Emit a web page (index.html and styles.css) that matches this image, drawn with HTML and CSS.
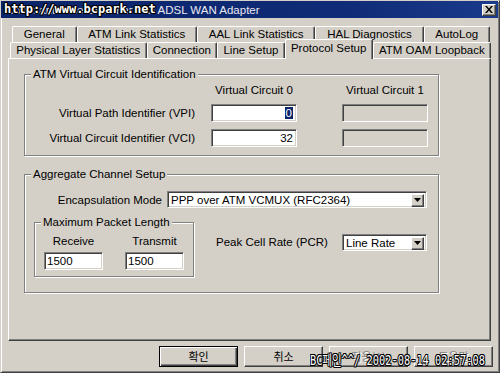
FILE: index.html
```html
<!DOCTYPE html>
<html>
<head>
<meta charset="utf-8">
<link rel="stylesheet" href="styles.css">
</head>
<body>
<div class="window">
  <div class="titlebar">
    <span class="title">Conexant AccessRunner PCI ADSL WAN Adapter</span>
    <span class="close"><svg width="8" height="7" viewBox="0 0 8 7"><path d="M0 0h2l2 2.4L6 0h2L5 3.5 8 7H6L4 4.6 2 7H0l3-3.5z" fill="#000"/></svg></span>
    <span class="wm-top">http://www.bcpark.net</span>
  </div>

  <div class="tabs">
    <div class="tabrow back">
      <div class="tab">General</div>
      <div class="tab">ATM Link Statistics</div>
      <div class="tab">AAL Link Statistics</div>
      <div class="tab">HAL Diagnostics</div>
      <div class="tab">AutoLog</div>
    </div>
    <div class="tabrow front">
      <div class="tab">Physical Layer Statistics</div>
      <div class="tab">Connection</div>
      <div class="tab">Line Setup</div>
      <div class="tab active">Protocol Setup</div>
      <div class="tab">ATM OAM Loopback</div>
    </div>
  </div>

  <div class="panel">
    <div class="group vc">
      <div class="group-title">ATM Virtual Circuit Identification</div>
      <div class="vc-grid">
        <div></div>
        <div class="colhead">Virtual Circuit 0</div>
        <div class="colhead">Virtual Circuit 1</div>

        <div class="lbl">Virtual Path Identifier (VPI)</div>
        <div class="field num"><span class="sel">0</span></div>
        <div class="field off"></div>

        <div class="lbl">Virtual Circuit Identifier (VCI)</div>
        <div class="field num">32</div>
        <div class="field off"></div>
      </div>
    </div>

    <div class="group agg">
      <div class="group-title">Aggregate Channel Setup</div>
      <div class="encap-row">
        <div class="encap-lbl">Encapsulation Mode</div>
        <div class="select wide">
          <span class="select-text">PPP over ATM VCMUX (RFC2364)</span>
          <span class="drop"><svg width="7" height="4" viewBox="0 0 7 4"><path d="M0 0h7L3.5 4z" fill="#000"/></svg></span>
        </div>
      </div>
      <div class="lower-row">
        <div class="group mpl">
          <div class="group-title">Maximum Packet Length</div>
          <div class="mpl-grid">
            <div class="mpl-lbl">Receive</div>
            <div class="mpl-lbl">Transmit</div>
            <div class="field small">1500</div>
            <div class="field small">1500</div>
          </div>
        </div>
        <div class="pcr-lbl">Peak Cell Rate (PCR)</div>
        <div class="select narrow">
          <span class="select-text">Line Rate</span>
          <span class="drop"><svg width="7" height="4" viewBox="0 0 7 4"><path d="M0 0h7L3.5 4z" fill="#000"/></svg></span>
        </div>
      </div>
    </div>
  </div>

  <div class="buttons">
    <div class="btn default">확인</div>
    <div class="btn">취소</div>
    <div class="btn disabled">적용(A)</div>
    <div class="btn disabled">도움말</div>
  </div>

  <span class="wm-bottom">BC페인^^/ 2002-08-14 02:57:08</span>
</div>
</body>
</html>
```

FILE: styles.css
```css
* { box-sizing: border-box; }

html, body {
  margin: 0;
  padding: 0;
  background: #d4d0c8;
}

body {
  font-family: "Liberation Sans", "Noto Sans CJK KR", sans-serif;
  font-size: 11.5px;
  color: #000;
}

.window {
  position: relative;
  width: 500px;
  height: 373px;
  background: #d4d0c8;
  border: 1px solid;
  border-color: #d4d0c8 #404040 #404040 #d4d0c8;
  box-shadow: inset 1px 1px 0 #fff, inset -1px -1px 0 #808080;
  overflow: hidden;
}

/* ---------- title bar ---------- */
.titlebar {
  position: relative;
  height: 17px;
  margin: 0 1px 0 0;
  background: linear-gradient(to right, #0a246a 0%, #102c78 70%, #1a3a8a 100%);
  display: flex;
  align-items: center;
  padding-left: 5px;
}

.title {
  flex: 1;
  color: #e8e8f0;
  font-size: 11.5px;
  white-space: nowrap;
}

.close {
  width: 14px;
  height: 12px;
  margin-right: 2px;
  background: #d4d0c8;
  border: 1px solid;
  border-color: #fff #404040 #404040 #fff;
  box-shadow: inset -1px -1px 0 #808080;
  display: flex;
  align-items: center;
  justify-content: center;
}

.wm-top {
  position: absolute;
  left: 3px;
  top: 1px;
  font-family: "DejaVu Sans Mono", monospace;
  font-weight: bold;
  font-size: 12px;
  line-height: 15px;
  color: #fff;
  text-shadow: 1px 0 0 #000, -1px 0 0 #000, 0 1px 0 #000, 0 -1px 0 #000,
               1px 1px 0 #000, -1px -1px 0 #000, 1px -1px 0 #000, -1px 1px 0 #000;
}

/* ---------- tabs ---------- */
.tabs {
  margin-top: 8px;
}

.tabrow {
  display: flex;
  height: 16px;
}

.tabrow.back {
  margin: 0 9px 0 11px;
}

.tabrow.front {
  margin: 0 8px 0 9px;
}

.tab {
  flex: 1 1 auto;
  height: 16px;
  padding: 0 4px;
  text-align: center;
  line-height: 15px;
  white-space: nowrap;
  border-top: 1px solid #fff;
  border-left: 1px solid #fff;
  border-right: 1px solid #404040;
  border-radius: 2px 2px 0 0;
  box-shadow: inset -1px 0 0 #808080;
  background: #d4d0c8;
}

.tab.active {
  position: relative;
  z-index: 2;
  height: 20px;
  margin-top: -3px;
  line-height: 16px;
}

/* ---------- panel ---------- */
.panel {
  position: relative;
  z-index: 1;
  height: 283px;
  margin: 0 8px 0 7px;
  border: 1px solid;
  border-color: #fff #404040 #404040 #fff;
  box-shadow: inset -1px -1px 0 #808080;
  padding: 15px 0 0 15px;
}

.group {
  position: relative;
  border: 1px solid #808080;
  box-shadow: 1px 1px 0 #fff, inset 1px 1px 0 #fff;
}

.group-title {
  position: absolute;
  top: -8px;
  left: 6px;
  padding: 0 2px;
  background: #d4d0c8;
  line-height: 14px;
  white-space: nowrap;
}

.group.vc {
  width: 415px;
  height: 82px;
  padding-top: 8px;
}

.vc-grid {
  display: grid;
  grid-template-columns: 186px 131px 86px;
  grid-template-rows: 14px 18px 18px;
  row-gap: 7px;
  align-items: center;
}

.colhead {
  width: 86px;
  display: flex;
  justify-content: center;
  white-space: nowrap;
  line-height: 14px;
}

.lbl {
  text-align: right;
  padding-right: 16px;
  white-space: nowrap;
}

.field {
  height: 18px;
  background: #fff;
  border: 1px solid;
  border-color: #808080 #fff #fff #808080;
  box-shadow: inset 1px 1px 0 #404040, inset -1px -1px 0 #d4d0c8;
  line-height: 16px;
  padding: 0 3px;
  white-space: nowrap;
}

.vc-grid .field {
  width: 86px;
}

.field.num {
  text-align: right;
}

.field.off {
  background: #d4d0c8;
}

.sel {
  background: #0a246a;
  color: #fff;
  padding: 0 1px;
}

.group.agg {
  width: 415px;
  height: 119px;
  margin-top: 18px;
  padding-top: 16px;
}

.encap-row {
  display: flex;
  align-items: center;
  height: 17px;
}

.encap-lbl {
  width: 137px;
  text-align: right;
  white-space: nowrap;
}

.select {
  display: flex;
  align-items: center;
  height: 17px;
  background: #fff;
  border: 1px solid;
  border-color: #808080 #fff #fff #808080;
  box-shadow: inset 1px 1px 0 #404040, inset -1px -1px 0 #d4d0c8;
  padding: 2px 2px 1px 3px;
}

.select.wide {
  width: 260px;
  margin-left: 5px;
}

.select.narrow {
  width: 85px;
  margin-top: 12px;
}

.select-text {
  flex: 1;
  white-space: nowrap;
  line-height: 13px;
}

.drop {
  width: 13px;
  height: 13px;
  background: #d4d0c8;
  border: 1px solid;
  border-color: #fff #404040 #404040 #fff;
  box-shadow: inset -1px -1px 0 #808080;
  display: flex;
  align-items: center;
  justify-content: center;
}

.lower-row {
  display: flex;
  align-items: flex-start;
  margin-top: 14px;
}

.group.mpl {
  width: 160px;
  height: 55px;
  margin-left: 9px;
  padding: 11px 0 0 9px;
}

.mpl-grid {
  display: grid;
  grid-template-columns: 59px 59px;
  grid-template-rows: 14px 18px;
  column-gap: 22px;
  row-gap: 4px;
}

.mpl-lbl {
  text-align: center;
  line-height: 14px;
}

.field.small {
  padding-left: 2px;
}

.pcr-lbl {
  width: 126px;
  margin-left: 22px;
  margin-top: 12px;
  line-height: 17px;
  white-space: nowrap;
}

/* ---------- buttons ---------- */
.buttons {
  display: flex;
  justify-content: flex-end;
  gap: 6px;
  margin: 5px 6px 0 0;
}

.btn {
  width: 79px;
  height: 21px;
  border: 1px solid;
  border-color: #fff #404040 #404040 #fff;
  box-shadow: inset -1px -1px 0 #808080;
  text-align: center;
  line-height: 18px;
  font-family: "Noto Sans CJK KR", "Liberation Sans", sans-serif;
  font-size: 11px;
}

.btn.default {
  border-color: #000;
  box-shadow: inset 1px 1px 0 #fff, inset -1px -1px 0 #404040, inset -2px -2px 0 #808080;
}

.btn.disabled {
  color: #808080;
  text-shadow: 1px 1px 0 #fff;
}

.wm-bottom {
  position: absolute;
  left: 309px;
  top: 351px;
  font-family: "DejaVu Sans Mono", "Noto Sans CJK KR", monospace;
  font-size: 14px;
  line-height: 16px;
  color: #fff;
  white-space: nowrap;
  transform: scaleX(0.74);
  transform-origin: left top;
  text-shadow: 1px 0 0 #000, -1px 0 0 #000, 0 1px 0 #000, 0 -1px 0 #000,
               1px 1px 0 #000, -1px -1px 0 #000, 1px -1px 0 #000, -1px 1px 0 #000;
}
```
